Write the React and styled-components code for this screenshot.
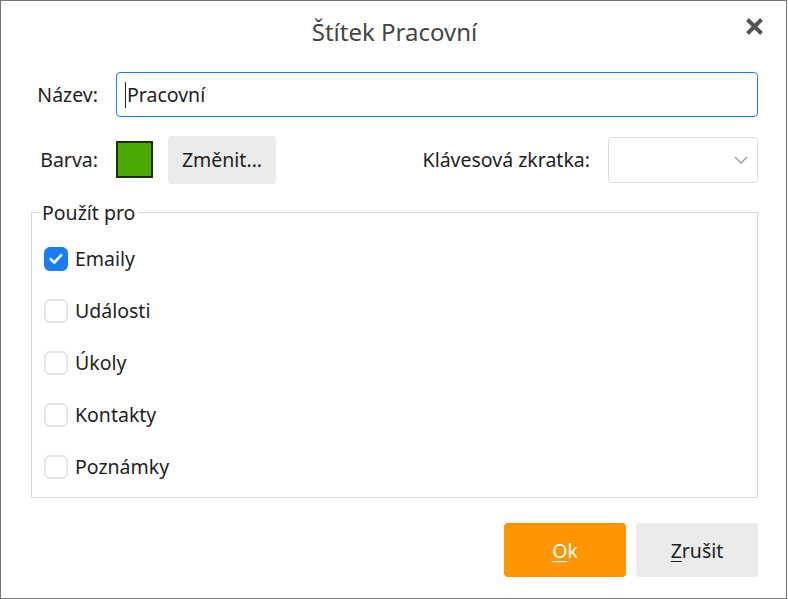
import React from "react";
import styled, { createGlobalStyle } from "styled-components";

const Global = createGlobalStyle`
  html, body { margin: 0; padding: 0; background: #fff; }
  body { font-family: "Noto Sans", "Open Sans", sans-serif; color: #1e1e1e; }
  * { box-sizing: border-box; }
`;

const Dialog = styled.div`
  position: relative;
  width: 787px;
  height: 599px;
  border: 1px solid #767676;
  background: #fff;
  padding: 0 28px 0 30px;
  display: flex;
  flex-direction: column;
`;

const Header = styled.div`
  height: 60px;
  display: flex;
  align-items: center;
  justify-content: center;
`;

const Title = styled.h1`
  margin: 0;
  font-weight: 400;
  font-size: 24px;
  color: #454545;
`;

const Close = styled.button`
  position: absolute;
  top: 14px;
  right: 21px;
  width: 22px;
  height: 22px;
  padding: 0;
  border: 0;
  background: transparent;
  display: flex;
  align-items: center;
  justify-content: center;
`;

const Row = styled.div`
  display: flex;
  align-items: center;
  height: ${(p) => p.$h}px;
  margin-top: ${(p) => p.$mt}px;
`;

const Label = styled.label`
  width: 67px;
  text-align: right;
  font-size: 19.5px;
  margin-right: 18px;
  white-space: nowrap;
`;

const TextInput = styled.div`
  flex: 1;
  height: 45px;
  border: 1px solid #1a7cf0;
  border-radius: 4px;
  display: flex;
  align-items: center;
  padding-left: 8px;
  font-size: 19.5px;
`;

const Caret = styled.span`
  display: inline-block;
  width: 1px;
  height: 26px;
  background: #222;
  margin-right: 1px;
`;

const Swatch = styled.div`
  width: 37px;
  height: 37px;
  background: #4caa00;
  border: 2px solid #1d2a14;
  margin-right: 15px;
`;

const ActionButton = styled.button`
  width: ${(p) => p.$w}px;
  height: ${(p) => p.$h}px;
  border: 0;
  border-radius: 4px;
  background: ${(p) => (p.$primary ? "#ff9500" : "#ebebeb")};
  color: ${(p) => (p.$primary ? "#fff" : "#1e1e1e")};
  font-family: inherit;
  font-size: 19.5px;
  padding: 0;
  display: flex;
  align-items: center;
  justify-content: center;
  u { text-decoration-thickness: 1px; text-underline-offset: 3px; }
`;

const Spacer = styled.div`
  flex: 1;
`;

const ShortcutLabel = styled.label`
  font-size: 19.5px;
  margin-right: 18px;
`;

const Select = styled.div`
  width: 150px;
  height: 46px;
  border: 1px solid #dcdcdc;
  border-radius: 4px;
  display: flex;
  align-items: center;
  justify-content: flex-end;
  padding-right: 9px;
`;

const Fieldset = styled.fieldset`
  margin: 17px 0 0 0;
  border: 1px solid #d9d9d9;
  padding: 9px 12px 4px 12px;
  min-width: 0;
`;

const Legend = styled.legend`
  margin-left: -5px;
  padding: 0 3px;
  font-size: 19.5px;
  line-height: 24px;
  position: relative;
  top: 1px;
`;

const CheckRow = styled.label`
  display: flex;
  align-items: center;
  height: 52px;
  font-size: 19.5px;
  padding-bottom: 1px;
`;

const Box = styled.span`
  width: 24px;
  height: 24px;
  border-radius: 6px;
  margin-right: 7px;
  display: flex;
  align-items: center;
  justify-content: center;
  background: ${(p) => (p.$checked ? "#1a7cf0" : "#fff")};
  border: ${(p) => (p.$checked ? "none" : "2px solid #e6e6e6")};
`;

const Footer = styled.div`
  display: flex;
  justify-content: flex-end;
  gap: 10px;
  margin-top: 25px;
`;

const items = [
  ["Emaily", true],
  ["Události", false],
  ["Úkoly", false],
  ["Kontakty", false],
  ["Poznámky", false],
];

export default function App() {
  return (
    <>
      <Global />
      <Dialog>
        <Header>
          <Title>Štítek Pracovní</Title>
        </Header>
        <Close aria-label="Zavřít">
          <svg width="19" height="19" viewBox="0 0 19 19">
            <path d="M2.5 2.5 L16.5 16.5 M16.5 2.5 L2.5 16.5" stroke="#555" strokeWidth="4" strokeLinecap="butt" />
          </svg>
        </Close>
        <Row $h={45} $mt={11}>
          <Label>Název:</Label>
          <TextInput>
            <Caret />
            Pracovní
          </TextInput>
        </Row>
        <Row $h={47} $mt={19}>
          <Label>Barva:</Label>
          <Swatch />
          <ActionButton $w={108} $h={48}>Změnit...</ActionButton>
          <Spacer />
          <ShortcutLabel>Klávesová zkratka:</ShortcutLabel>
          <Select>
            <svg width="14" height="8" viewBox="0 0 14 8">
              <path d="M1 1 L7 7 L13 1" fill="none" stroke="#9a9a9a" strokeWidth="1.4" />
            </svg>
          </Select>
        </Row>
        <Fieldset>
          <Legend>Použít pro</Legend>
          {items.map(([t, c]) => (
            <CheckRow key={t}>
              <Box $checked={c}>
                {c && (
                  <svg width="14" height="12" viewBox="0 0 14 12">
                    <path d="M1.8 6.2 L5.3 9.6 L12.2 2.2" fill="none" stroke="#fff" strokeWidth="2.6" strokeLinecap="round" strokeLinejoin="round" />
                  </svg>
                )}
              </Box>
              {t}
            </CheckRow>
          ))}
        </Fieldset>
        <Footer>
          <ActionButton $primary $w={122} $h={54}>
            <u>O</u>k
          </ActionButton>
          <ActionButton $w={122} $h={54}>
            <u>Z</u>rušit
          </ActionButton>
        </Footer>
      </Dialog>
    </>
  );
}
